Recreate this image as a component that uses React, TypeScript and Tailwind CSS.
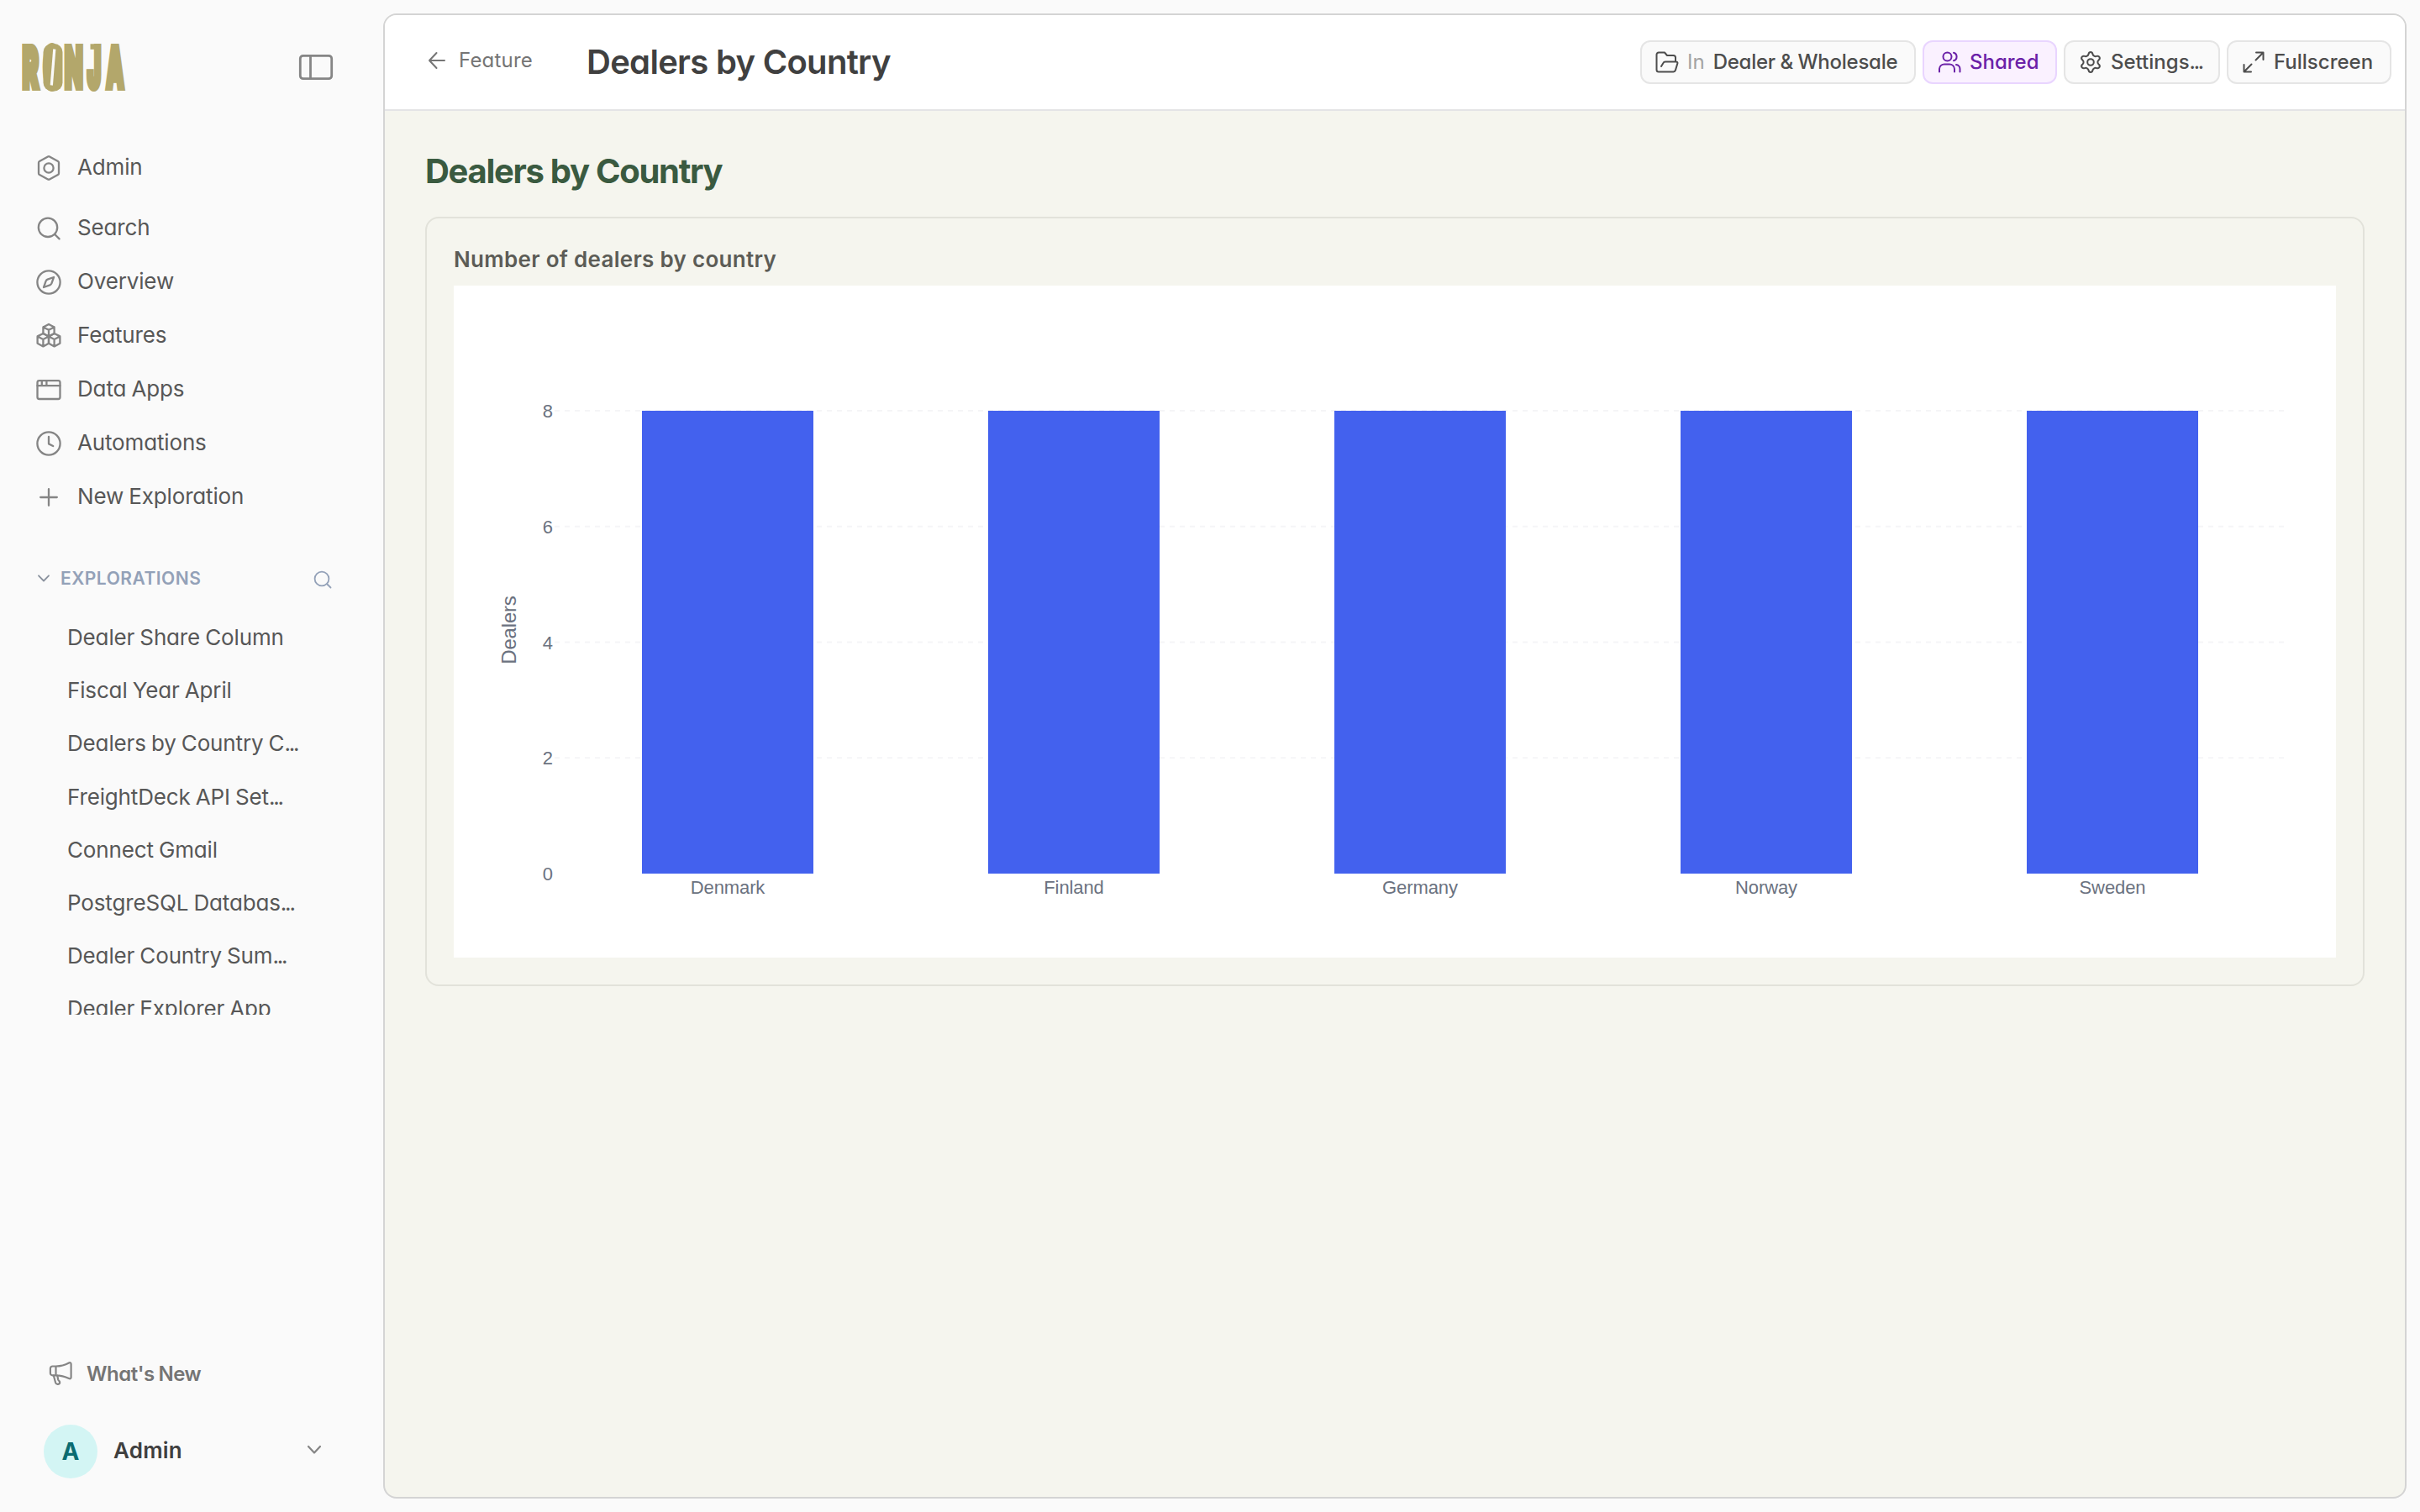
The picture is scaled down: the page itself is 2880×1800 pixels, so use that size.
import type { ReactNode } from 'react'
import { clsx } from 'clsx'

const NAV_ITEMS = [
  { label: 'Search', icon: 'search' },
  { label: 'Overview', icon: 'compass' },
  { label: 'Features', icon: 'cubes' },
  { label: 'Data Apps', icon: 'window' },
  { label: 'Automations', icon: 'clock' },
  { label: 'New Exploration', icon: 'plus' },
] as const

const EXPLORATIONS = [
  'Dealer Share Column',
  'Fiscal Year April',
  'Dealers by Country C...',
  'FreightDeck API Set...',
  'Connect Gmail',
  'PostgreSQL Databas...',
  'Dealer Country Sum...',
  'Dealer Explorer App',
]

const DATA = [
  { country: 'Denmark', dealers: 8 },
  { country: 'Finland', dealers: 8 },
  { country: 'Germany', dealers: 8 },
  { country: 'Norway', dealers: 8 },
  { country: 'Sweden', dealers: 8 },
]

// Icons are drawn on a 16 unit grid, two pixels to the unit
const ICONS: Record<string, ReactNode> = {
  hexagon: (
    <>
      <path d="M7.5 1.25a1 1 0 0 1 1 0l5 2.75a1 1 0 0 1 .5.9v6.2a1 1 0 0 1-.5.9l-5 2.75a1 1 0 0 1-1 0l-5-2.75a1 1 0 0 1-.5-.9V4.9a1 1 0 0 1 .5-.9z" />
      <circle cx="8" cy="8" r="2.8" />
    </>
  ),
  search: (
    <>
      <circle cx="7.5" cy="7.4" r="5.6" />
      <path d="m11.6 11.5 2.7 2.7" />
    </>
  ),
  compass: (
    <>
      <circle cx="8" cy="8" r="6.8" />
      <path d="M11 5 9.7 8.7a2 2 0 0 1-1 1L5 11l1.3-3.7a2 2 0 0 1 1-1z" />
    </>
  ),
  cubes: (
    <>
      <path d="M8 1 11.3 2.7v3.8L8 8.2 4.7 6.5V2.7zM4.7 2.7 8 4.4l3.3-1.7M8 4.4v3.8" />
      <path d="M4.7 6.5 8 8.2v4.2l-3.3 1.8-3.4-1.8V8.2zM1.3 8.2 4.7 10 8 8.2M4.7 10v4.2" />
      <path d="m11.3 6.5 3.4 1.7v4.2l-3.4 1.8L8 12.4V8.2zM8 8.2l3.3 1.8 3.4-1.8M11.3 10v4.2" />
    </>
  ),
  window: (
    <>
      <rect x="1.25" y="2.6" width="13.5" height="10.9" rx="1.1" />
      <path d="M1.25 5.6h13.5M3.9 2.8v2.6M6.7 2.8v2.6" />
    </>
  ),
  clock: (
    <>
      <circle cx="8" cy="8" r="6.8" />
      <path d="M8 4v4.2l2.6 1.3" />
    </>
  ),
  plus: <path d="M8 3.1v9.8M3.1 8h9.8" />,
}

function NavIcon({ name }: { name: string }) {
  return (
    <svg viewBox="0 0 16 16" className="size-8 shrink-0 text-[#858585]" fill="none" stroke="currentColor" strokeWidth="1.15" strokeLinecap="round" strokeLinejoin="round">
      {ICONS[name]}
    </svg>
  )
}

function NavItem({ label, icon }: { label: string; icon: string }) {
  return (
    <a className="flex h-16 items-center gap-[18px] pl-[42px] text-[26px] tracking-[-0.15px] text-[#575757] [word-spacing:-1px]">
      <NavIcon name={icon} />
      <span className="-mt-1">{label}</span>
    </a>
  )
}

// Sets the trailing dots tighter than the rest of the label
function Label({ text }: { text: string }) {
  if (!text.endsWith('...')) return <span>{text}</span>
  return (
    <span>
      {text.slice(0, -3)}
      <span className="tracking-[-2.2px]">...</span>
    </span>
  )
}

function Logo() {
  return (
    <svg viewBox="0 -24 128 104" className="-my-6 h-[104px] w-32" fill="#b3a76b" fontFamily="Inter, sans-serif" fontWeight="900" fontSize="66">
      <g stroke="#b3a76b" strokeWidth="8">
        <text transform="translate(.8 53.3) scale(.435 1)">R</text>
        <text transform="translate(25.5 53.3) scale(.41 1)">O</text>
        <text transform="translate(51 53.3) scale(.425 1)">N</text>
        <text transform="translate(78 53.3) scale(.41 1)">J</text>
        <text transform="translate(100.5 53.3) scale(.4 1)">A</text>
      </g>
      <rect x="25.5" y="1" width="23" height="56.5" rx="10" />
      <rect x="81.5" y="1.3" width="10" height="6.5" />
      <path d="M38.8 7.5 35.3 50.5" stroke="#fafafa" strokeWidth="3.2" />
    </svg>
  )
}

function Sidebar() {
  return (
    <aside className="flex h-full w-[456px] shrink-0 flex-col">
      <div className="flex h-[168px] items-start justify-between pl-[26px] pr-[59px] pt-[51px]">
        <Logo />
        <svg viewBox="0 0 42 32" className="mt-[13px] h-8 w-[42px] text-[#858585]" fill="none" stroke="currentColor" strokeWidth="2.8">
          <rect x="2.3" y="2.3" width="37.4" height="27.4" rx="3.5" />
          <path d="M14.5 2.3v27.4" />
        </svg>
      </div>

      <nav>
        <NavItem label="Admin" icon="hexagon" />
        <div className="mt-2">
          {NAV_ITEMS.map(item => (
            <NavItem key={item.label} label={item.label} icon={item.icon} />
          ))}
        </div>
      </nav>

      <div className="mt-[37px] flex h-14 items-center pl-11 pr-[60px] text-[#93a1b8]">
        <svg viewBox="0 0 16 16" className="size-4 text-[#8a929e]" fill="none" stroke="currentColor" strokeWidth="1.8" strokeLinecap="round" strokeLinejoin="round">
          <path d="m2 4.3 6 6.2 6-6.2" />
        </svg>
        <span className="ml-3 flex-1 text-[21px] font-semibold tracking-[0.5px]">EXPLORATIONS</span>
        <svg viewBox="0 0 24 24" className="mt-0.5 size-6" fill="none" stroke="currentColor" strokeWidth="1.8" strokeLinecap="round">
          <circle cx="11" cy="11" r="8.4" />
          <path d="m17.5 17.5 4 4" />
        </svg>
      </div>

      <ul className="mt-2.5 h-[481px] overflow-hidden">
        {EXPLORATIONS.map(name => (
          <li key={name} className="flex h-[63.2px] items-center pl-20 text-[26px] tracking-[-0.15px] text-[#575757] [word-spacing:-1px]">
            <Label text={name} />
          </li>
        ))}
      </ul>

      <div className="mt-auto flex h-14 items-center gap-[15px] pl-14 text-[24px] font-semibold tracking-[-0.45px] text-[#757575] [word-spacing:-1px]">
        <svg viewBox="0 0 32 32" className="size-8 text-[#858585]" fill="none" stroke="currentColor" strokeWidth="2.2" strokeLinecap="round" strokeLinejoin="round">
          <path d="M10.5 6.5h-4a2.6 2.6 0 0 0-2.6 2.6v5.6a2.6 2.6 0 0 0 2.6 2.6h4zM10.5 6.5c6 0 11-1.5 15.500-4 1.5-.8 2.6 0 2.6 1.5v15.5c0 1.5-1 2.3-2.6 1.5-4.5-2.3-9.500-3.7-15.5-3.7" />
          <path d="m7.8 17.5 2.3 8.5c.9 3 5.5 2.2 5-.8-.2-1-1.6-1.7-1.9-2.7l-.9-4.800" />
        </svg>
        What's New
      </div>

      <div className="mb-10 mt-8 flex h-16 items-center pl-[52px] pr-[72px]">
        <div className="flex size-16 items-center justify-center rounded-full bg-[#d3f5f4] text-[28px] font-bold text-[#0a6b70]">
          A
        </div>
        <span className="-mt-1 ml-[19px] flex-1 text-[26px] font-semibold tracking-[0.2px] text-[#3f3f3f]">Admin</span>
        <svg viewBox="0 0 20 20" className="-mt-1 size-5 text-[#858585]" fill="none" stroke="currentColor" strokeWidth="2.2" strokeLinecap="round" strokeLinejoin="round">
          <path d="m3 6 7 7.5 7-7.5" />
        </svg>
      </div>
    </aside>
  )
}

function ToolbarButton({ children, className }: { children: ReactNode; className?: string }) {
  return (
    <button className={clsx('flex h-[52px] items-center rounded-xl border-2 text-[24px] font-medium', className)}>
      {children}
    </button>
  )
}

function ToolbarIcon({ children }: { children: ReactNode }) {
  return (
    <svg viewBox="0 0 28 28" className="size-7 shrink-0" fill="none" stroke="currentColor" strokeWidth="2" strokeLinecap="round" strokeLinejoin="round">
      {children}
    </svg>
  )
}

function Header() {
  return (
    <header className="box-content flex h-[112px] shrink-0 items-center border-b-2 border-[#e4e4e6] bg-white pl-[50px] pr-4">
      <a className="-mt-1 flex items-center gap-[14px] text-[24px] tracking-[0.2px] text-[#757575]">
        <svg viewBox="0 0 24 24" className="size-6" fill="none" stroke="currentColor" strokeWidth="2" strokeLinecap="round" strokeLinejoin="round">
          <path d="M21 12H3M11.5 3 3 12l8.5 9" />
        </svg>
        Feature
      </a>
      <h1 className="ml-16 flex-1 text-[40px] font-semibold tracking-[-0.7px]  text-[#404040]">
        Dealers by Country
      </h1>
      <div className="flex gap-2">
        <ToolbarButton className="w-[328px] border-[#e5e5e5] bg-[#fafafa] pl-4 text-[#4d4d4d]">
          <ToolbarIcon>
            <path d="M5 25.5h16.5a2.5 2.5 0 0 0 2.4-1.9l2.5-8.2a1.6 1.6 0 0 0-1.5-2H12a3 3 0 0 0-2.7 1.8L7 19M24 13V8.5a2.5 2.5 0 0 0-2.5-2.5H14l-3-3.5H4A2.5 2.5 0 0 0 1.5 5v18A2.5 2.5 0 0 0 4 25.5" />
          </ToolbarIcon>
          <span className="ml-[10px] font-normal text-[#a3a3a3]">In</span>
          <span className="ml-[10px] tracking-[-0.25px] [word-spacing:-0.5px]">Dealer &amp; Wholesale</span>
        </ToolbarButton>
        <ToolbarButton className="w-40 border-[#e9d5ff] bg-[#faf1ff] pl-4 text-[#6b21a8]">
          <ToolbarIcon>
            <circle cx="11.5" cy="7.5" r="5" />
            <path d="M2 25.5V22a6 6 0 0 1 6-5.5h6a6 6 0 0 1 6 5.5v3.5M19 2.7a5 5 0 0 1 0 9.6M22 17a5 5 0 0 1 4.5 5v3.5" />
          </ToolbarIcon>
          <span className="ml-[10px]">Shared</span>
        </ToolbarButton>
        <ToolbarButton className="w-[186px] border-[#e5e5e5] bg-[#fafafa] pl-4 text-[#4d4d4d]">
          <ToolbarIcon>
            <path d="M14 2c1.6 0 2.2 1 2.5 2.5.2 1 .8 1.7 1.7 2.2s1.8.6 2.8.2c1.5-.5 2.7-.4 3.5 1s.3 2.5-.9 3.5c-.8.7-1.2 1.5-1.2 2.6s.4 1.9 1.2 2.6c1.2 1 1.7 2.1.9 3.5s-2 1.5-3.5 1c-1-.4-1.9-.3-2.8.2s-1.5 1.2-1.7 2.2C16.2 25 15.6 26 14 26s-2.200-1-2.5-2.5c-.2-1-.8-1.7-1.7-2.2s-1.8-.6-2.8-.2c-1.5.5-2.7.4-3.5-1s-.3-2.5.9-3.5c.8-.7 1.2-1.5 1.2-2.6s-.4-1.9-1.2-2.6c-1.2-1-1.7-2.1-.9-3.5s2-1.5 3.5-1c1 .4 1.9.3 2.8-.2s1.5-1.2 1.7-2.200C11.8 3 12.4 2 14 2z" />
            <circle cx="14" cy="14" r="3.8" />
          </ToolbarIcon>
          <span className="ml-[10px]">
            <Label text="Settings..." />
          </span>
        </ToolbarButton>
        <ToolbarButton className="w-[196px] border-[#e5e5e5] bg-[#fafafa] pl-4 text-[#4d4d4d]">
          <ToolbarIcon>
            <path d="M16.5 11.5 25 3M17 2.5h8.5V11M11.5 16.5 3 25M2.5 17v8.5H11" />
          </ToolbarIcon>
          <span className="ml-[10px]">Fullscreen</span>
        </ToolbarButton>
      </div>
    </header>
  )
}

// Plot area inside the 2240x800 canvas
const PLOT = { left: 120, right: 2180, top: 149, bottom: 700 }
const MAX = 8
const TICKS = [0, 2, 4, 6, 8]
const BAR_WIDTH = 204

function DealersChart() {
  const band = (PLOT.right - PLOT.left) / DATA.length
  const y = (value: number) => PLOT.bottom - (value / MAX) * (PLOT.bottom - PLOT.top)

  return (
    <svg viewBox="0 0 2240 800" className="block h-[800px] w-full bg-white" fontFamily="'Liberation Sans', Arial, sans-serif" fontSize="22" fill="#6b7280">
      {TICKS.map(tick => (
        <g key={tick}>
          {tick > 0 && (
            <line x1={PLOT.left} x2={PLOT.right} y1={y(tick)} y2={y(tick)} stroke="#f5f5f7" strokeWidth="2" strokeDasharray="6 6" />
          )}
          <text x="118" y={y(tick) + 8} textAnchor="end">{tick}</text>
        </g>
      ))}
      <text transform="translate(74 410) rotate(-90)" textAnchor="middle" fontSize="24" letterSpacing="-0.2">Dealers</text>
      {DATA.map((d, i) => {
        const center = PLOT.left + band * (i + 0.5)
        return (
          <g key={d.country}>
            <rect x={center - BAR_WIDTH / 2} y={y(d.dealers)} width={BAR_WIDTH} height={PLOT.bottom - y(d.dealers)} fill="#4361ee" />
            <text x={center} y="724" textAnchor="middle" letterSpacing="-0.1">{d.country}</text>
          </g>
        )
      })}
    </svg>
  )
}

export default function App() {
  return (
    <div className="flex h-[1800px] w-[2880px] overflow-hidden bg-[#fafafa] font-['Inter',sans-serif] [font-feature-settings:'cv11']">
      <Sidebar />
      <main className="mb-4 mr-4 mt-4 flex flex-1 flex-col overflow-hidden rounded-2xl border-2 border-[#d4d4d4] bg-[#f5f5ee]">
        <Header />
        <div className="flex flex-col px-12 pt-[42px] [font-feature-settings:normal]">
          <h2 className="h-[60px] text-[40px] font-bold leading-[60px] tracking-[-1.3px] text-[#3a5a40]">Dealers by Country</h2>
          <section className="mt-6 rounded-2xl border-2 border-[#e2e2da] px-8 pb-8">
            <h3 className="h-20 pt-[29px] text-[26px] font-semibold leading-10 tracking-[0.3px] text-[#5c5c56]">
              Number of dealers by country
            </h3>
            <DealersChart />
          </section>
        </div>
      </main>
    </div>
  )
}
